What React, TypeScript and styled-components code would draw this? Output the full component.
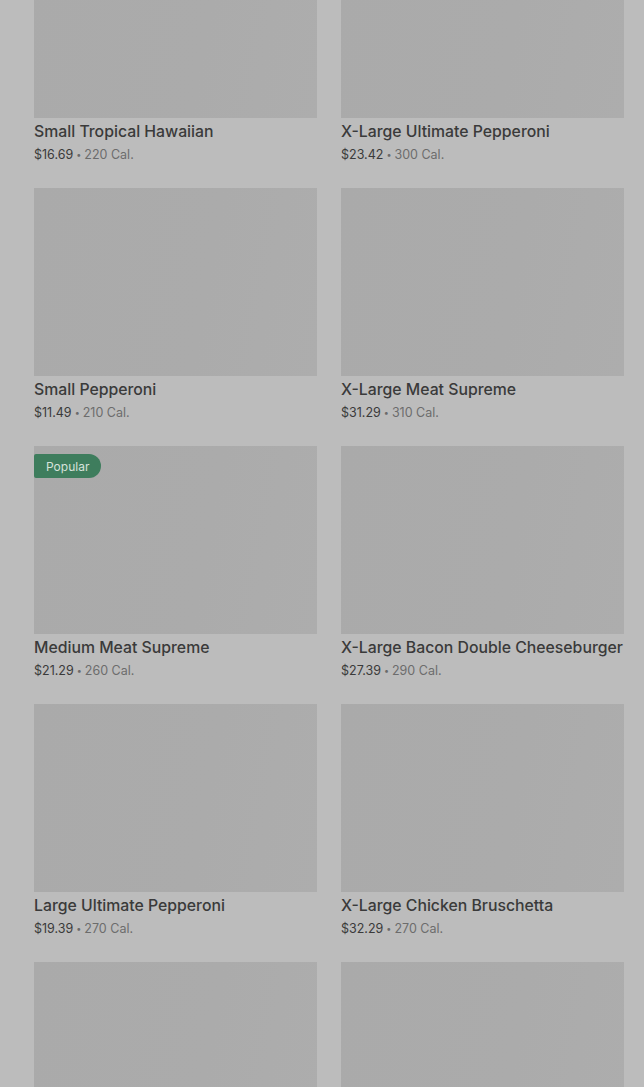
import styled, { createGlobalStyle } from "styled-components"

type Item = { name?: string; price?: string; cal?: number; popular?: boolean }

const items: Item[] = [
  { name: "Small Tropical Hawaiian", price: "$16.69", cal: 220 },
  { name: "X-Large Ultimate Pepperoni", price: "$23.42", cal: 300 },
  { name: "Small Pepperoni", price: "$11.49", cal: 210 },
  { name: "X-Large Meat Supreme", price: "$31.29", cal: 310 },
  { name: "Medium Meat Supreme", price: "$21.29", cal: 260, popular: true },
  { name: "X-Large Bacon Double Cheeseburger", price: "$27.39", cal: 290 },
  { name: "Large Ultimate Pepperoni", price: "$19.39", cal: 270 },
  { name: "X-Large Chicken Bruschetta", price: "$32.29", cal: 270 },
  {},
  {},
]

const GlobalStyle = createGlobalStyle`
  html, body {
    margin: 0;
    padding: 0;
    background: #bcbcbc;
    overflow: hidden;
  }
  body {
    font-family: Inter, "Noto Sans", sans-serif;
  }
`

const App = () => (
  <>
    <GlobalStyle />
    <Page>
      <Grid>
        {items.map((item, i) => (
          <Card key={i}>
            <Thumb>{item.popular && <Badge>Popular</Badge>}</Thumb>
            {item.name && (
              <>
                <Title>{item.name}</Title>
                <Meta>
                  <Price>{item.price}</Price>
                  <Dot>•</Dot>
                  <Cal>{item.cal} Cal.</Cal>
                </Meta>
              </>
            )}
          </Card>
        ))}
      </Grid>
    </Page>
  </>
)

const Page = styled.div`
  height: 1087px;
  overflow: hidden;
  padding: 0 20px 0 34px;
  background: #bcbcbc;
`

const Grid = styled.div`
  margin-top: -70px;
  display: grid;
  grid-template-columns: 283px 283px;
  column-gap: 24px;
`

const Card = styled.div`
  height: 258px;
  display: flex;
  flex-direction: column;
`

const Thumb = styled.div`
  position: relative;
  height: 188px;
  background: linear-gradient(100deg, #aaaaaa 0%, #ababab 60%, #adadad 100%);
`

const Badge = styled.span`
  position: absolute;
  top: 8px;
  left: 0;
  height: 24px;
  padding: 0 12px;
  display: flex;
  align-items: center;
  background: #3e7d5d;
  color: #d6e2db;
  font-size: 12px;
  border-radius: 2px 12px 12px 2px;
`

const Title = styled.div`
  margin-top: 4px;
  font-size: 15.8px;
  font-weight: 500;
  color: #3a3a3a;
  line-height: 20px;
  white-space: nowrap;
`

const Meta = styled.div`
  margin-top: 4px;
  font-size: 12.5px;
  line-height: 18px;
  display: flex;
  align-items: center;
  gap: 3px;
`

const Price = styled.span`
  color: #3a3a3a;
`

const Dot = styled.span`
  color: #6a6a6a;
  font-size: 9px;
`

const Cal = styled.span`
  color: #6c6c6c;
`

export default App
